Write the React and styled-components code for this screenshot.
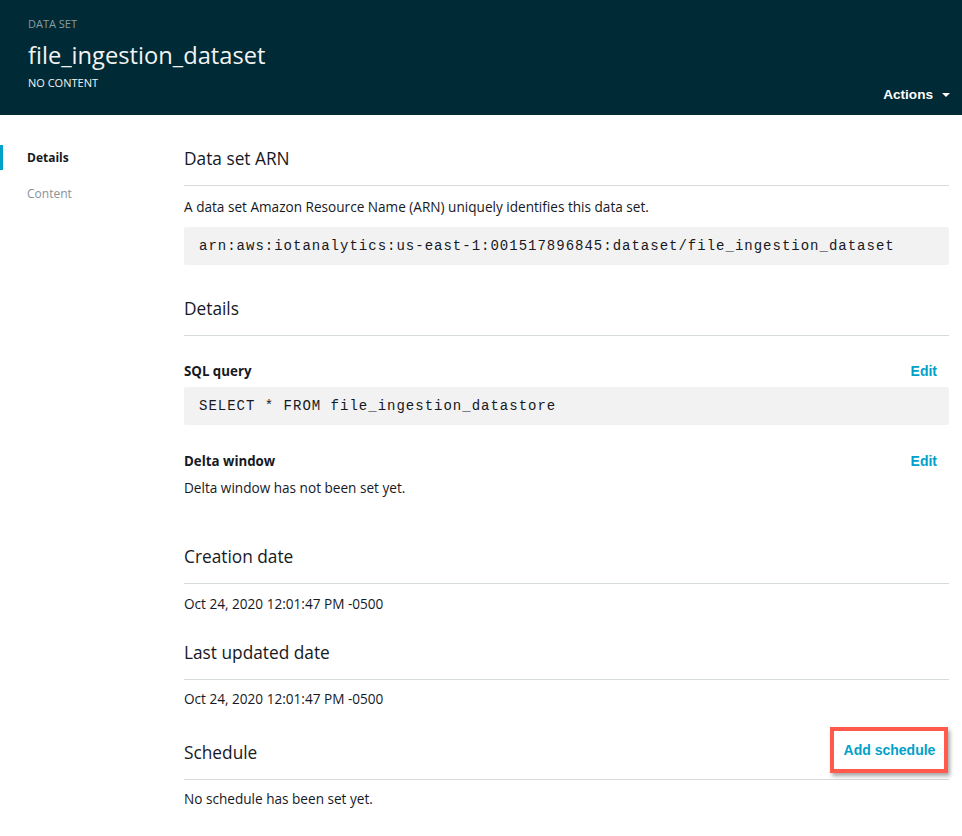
import styled, { createGlobalStyle } from "styled-components"

const GlobalStyle = createGlobalStyle`
    body {
        margin: 0;
        background: #fff;
        font-family: 'Open Sans', 'Noto Sans', sans-serif;
        color: #16191f;
    }
`

export default function App() {
    return (
        <>
            <GlobalStyle />
            <Header>
                <Kicker>DATA SET</Kicker>
                <Title>file_ingestion_dataset</Title>
                <HeaderRow>
                    <Status>NO CONTENT</Status>
                    <Actions>
                        Actions
                        <Caret />
                    </Actions>
                </HeaderRow>
            </Header>

            <Body>
                <Sidebar>
                    <NavItem active>Details</NavItem>
                    <NavItem>Content</NavItem>
                </Sidebar>

                <Main>
                    <SectionHead>
                        <SectionTitle>Data set ARN</SectionTitle>
                    </SectionHead>
                    <Text top={11}>A data set Amazon Resource Name (ARN) uniquely identifies this data set.</Text>
                    <CodeBox top={10}>arn:aws:iotanalytics:us-east-1:001517896845:dataset/file_ingestion_dataset</CodeBox>

                    <SectionHead top={32}>
                        <SectionTitle>Details</SectionTitle>
                    </SectionHead>
                    <LabelRow top={25}>
                        <Label>SQL query</Label>
                        <LinkButton>Edit</LinkButton>
                    </LabelRow>
                    <CodeBox top={6}>SELECT * FROM file_ingestion_datastore</CodeBox>
                    <LabelRow top={26}>
                        <Label>Delta window</Label>
                        <LinkButton>Edit</LinkButton>
                    </LabelRow>
                    <Text top={7}>Delta window has not been set yet.</Text>

                    <SectionHead top={47}>
                        <SectionTitle>Creation date</SectionTitle>
                    </SectionHead>
                    <Text top={10}>Oct 24, 2020 12:01:47 PM -0500</Text>

                    <SectionHead top={27}>
                        <SectionTitle>Last updated date</SectionTitle>
                    </SectionHead>
                    <Text top={9}>Oct 24, 2020 12:01:47 PM -0500</Text>

                    <SectionHead top={32}>
                        <SectionTitle>Schedule</SectionTitle>
                        <Highlight>
                            <LinkButton>Add schedule</LinkButton>
                        </Highlight>
                    </SectionHead>
                    <Text top={9}>No schedule has been set yet.</Text>
                </Main>
            </Body>
        </>
    )
}

const Header = styled.header`
    background: #002a35;
    height: 115px;
    box-sizing: border-box;
    padding: 15px 0 0 28px;
    color: #fff;
`
const Kicker = styled.div`
    font-size: 11px;
    line-height: 18px;
    color: #8c9ca1;
`
const Title = styled.h1`
    margin: 6px 0 0;
    font-size: 23.7px;
    font-weight: 400;
    line-height: 32px;
    color: #f2f4f4;
`
const HeaderRow = styled.div`
    display: flex;
    justify-content: space-between;
    align-items: flex-start;
`
const Status = styled.div`
    margin-top: 4px;
    font-size: 11px;
    line-height: 16px;
    color: #f2f4f4;
`
const Actions = styled.button`
    display: flex;
    align-items: center;
    gap: 9px;
    margin: 15px 12px 0 0;
    padding: 0;
    border: none;
    background: none;
    color: #fff;
    font-family: 'Liberation Sans', Arial, sans-serif;
    font-size: 13.6px;
    font-weight: 700;
    line-height: 18px;
`
const Caret = styled.span`
    width: 0;
    height: 0;
    border-left: 4px solid transparent;
    border-right: 4px solid transparent;
    border-top: 4px solid #fff;
`
const Body = styled.div`
    display: flex;
`
const Sidebar = styled.nav`
    width: 184px;
    flex-shrink: 0;
    padding-top: 30px;
    display: flex;
    flex-direction: column;
    gap: 11px;
`
const NavItem = styled.div`
    height: 25px;
    line-height: 25px;
    padding-left: ${p => (p.active ? "24px" : "27px")};
    border-left: ${p => (p.active ? "3px solid #00a1c9" : "none")};
    font-size: 12px;
    font-weight: ${p => (p.active ? 700 : 400)};
    color: ${p => (p.active ? "#16191f" : "#879196")};
`
const Main = styled.main`
    flex: 1;
    padding: 32px 13px 20px 0;
`
const SectionHead = styled.div`
    display: flex;
    justify-content: space-between;
    align-items: flex-start;
    height: 39px;
    margin-top: ${p => p.top || 0}px;
    border-bottom: 1px solid #d5dbdb;
    box-sizing: border-box;
`
const SectionTitle = styled.h2`
    margin: 0;
    font-size: 17.3px;
    font-weight: 400;
    line-height: 24px;
    color: #16191f;
`
const Text = styled.p`
    margin: ${p => p.top || 0}px 0 0;
    font-size: 13.6px;
    line-height: 20px;
    color: #16191f;
`
const CodeBox = styled.pre`
    margin: ${p => p.top || 0}px 0 0;
    height: 38px;
    box-sizing: border-box;
    padding: 0 15px;
    background: #f2f2f2;
    border-radius: 2px;
    font-family: 'Liberation Mono', 'Courier New', monospace;
    font-size: 14px;
    letter-spacing: 1px;
    line-height: 39px;
    color: #16191f;
`
const LabelRow = styled.div`
    display: flex;
    justify-content: space-between;
    align-items: center;
    margin-top: ${p => p.top || 0}px;
    padding-right: 12px;
    height: 20px;
`
const Label = styled.span`
    font-size: 13.3px;
    font-weight: 700;
    color: #16191f;
`
const LinkButton = styled.button`
    padding: 0;
    border: none;
    background: none;
    font-family: 'Liberation Sans', Arial, sans-serif;
    font-size: 14px;
    font-weight: 700;
    color: #00a1c9;
`
const Highlight = styled.div`
    align-self: flex-end;
    margin: 0 1px 6px 0;
    width: 118px;
    height: 46px;
    flex-shrink: 0;
    box-sizing: border-box;
    display: flex;
    align-items: center;
    justify-content: center;
    padding-left: 1px;
    border: 4px solid #ff5a4c;
    background: #fff;
    box-shadow: 2px 3px 4px rgba(0, 0, 0, 0.35);
`
